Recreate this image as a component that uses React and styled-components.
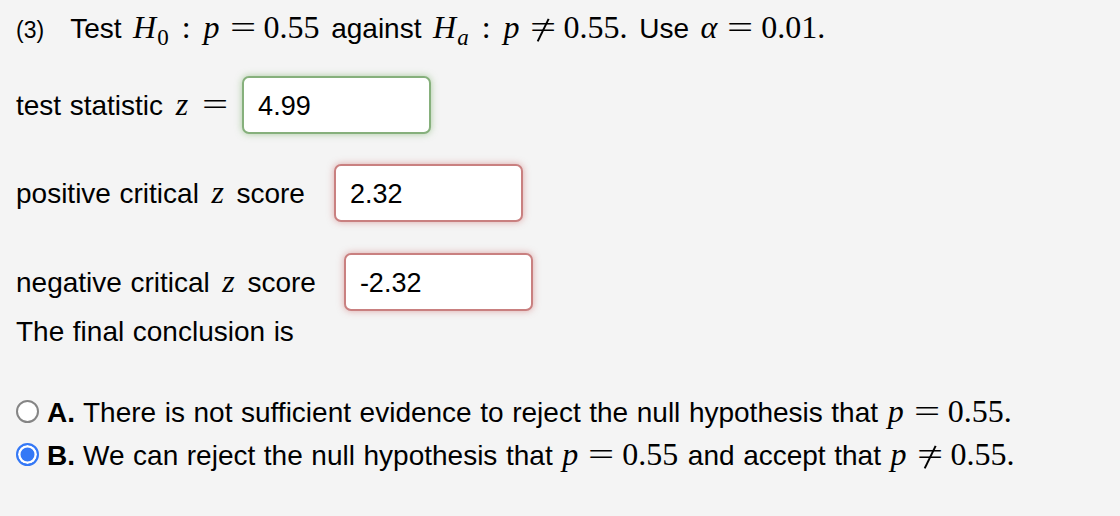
import React from "react";
import styled, { createGlobalStyle } from "styled-components";

const Global = createGlobalStyle`
  html, body { margin: 0; padding: 0; background: #f4f4f4; }
  body { font-family: "Liberation Sans", Arial, sans-serif; color: #000; }
`;

const Page = styled.div`
  width: 1120px;
  height: 516px;
  box-sizing: border-box;
  padding: 9px 0 0 16px;
  background: #f4f4f4;
  font-size: 28px;
  word-spacing: 0.8px;
`;

const Line = styled.div`
  height: ${(p) => p.$h || 36}px;
  line-height: ${(p) => p.$h || 36}px;
  margin-top: ${(p) => p.$mt || 0}px;
  white-space: nowrap;
`;

const Num = styled.span`
  font-size: 23px;
  margin-right: 26px;
`;

const Math = styled.span`
  margin: 0 ${(p) => p.$mx ?? 3}px;
  white-space: nowrap;
  word-spacing: 0;
`;

const M = styled.span`
  font-family: "Liberation Serif", "Times New Roman", serif;
  font-size: ${(p) => p.$size || 32}px;
  font-style: ${(p) => (p.$i ? "italic" : "normal")};
`;

const Sub = styled.span`
  font-family: "Liberation Serif", "Times New Roman", serif;
  font-size: 23px;
  font-style: ${(p) => (p.$i ? "italic" : "normal")};
  position: relative;
  top: 7px;
  margin-left: 1px;
`;

const Colon = styled.span`
  font-family: "Liberation Serif", "Times New Roman", serif;
  font-size: 32px;
  margin: 0 13px;
`;

const Rel = styled.span`
  position: relative;
  display: inline-block;
  width: 26px;
  line-height: 36px;
  text-align: center;
  font-family: "Liberation Serif", "Times New Roman", serif;
  font-size: 32px;
  margin: 0 8px 0 10px;
  ${(p) =>
    p.$ne &&
    `
    &::after {
      content: "";
      position: absolute;
      left: 50%;
      top: 21px;
      width: 1.6px;
      height: 25px;
      background: #000;
      transform: translate(-50%, -50%) rotate(26deg);
    }
  `}
`;

const Glyph = styled.span`
  display: inline-block;
  transform: scaleX(1.45);
`;

const Row = styled.div`
  display: flex;
  align-items: center;
  height: 58px;
  margin-top: ${(p) => p.$mt}px;
  white-space: nowrap;
`;

const Label = styled.span`
  line-height: 36px;
`;

const Z = styled.span`
  font-family: "Liberation Serif", "Times New Roman", serif;
  font-style: italic;
  font-size: 32px;
  margin: 0 4px;
`;

const Box = styled.div`
  box-sizing: border-box;
  width: 189px;
  height: 58px;
  margin-left: ${(p) => p.$ml}px;
  background: #fff;
  border: 2px solid ${(p) => (p.$ok ? "#86b07c" : "#c98080")};
  border-radius: 7px;
  box-shadow: 0 0 7px ${(p) => (p.$ok ? "rgba(110,170,90,0.55)" : "rgba(200,90,90,0.5)")};
  padding: 2px 0 0 14px;
  display: flex;
  align-items: center;
  font-size: 27px;
`;

const Option = styled.div`
  display: flex;
  align-items: center;
  height: 43px;
  margin-top: ${(p) => p.$mt || 0}px;
  white-space: nowrap;
`;

const Radio = styled.span`
  box-sizing: border-box;
  width: 23px;
  height: 23px;
  border-radius: 50%;
  margin-right: 8px;
  flex: none;
  background: ${(p) => (p.$on ? "#3478f6" : "#fff")};
  border: ${(p) => (p.$on ? "2.5px solid #3478f6" : "2px solid #858585")};
  box-shadow: ${(p) => (p.$on ? "inset 0 0 0 2.5px #fff" : "none")};
`;

const Letter = styled.b`
  margin-right: 8px;
`;

const Eq = () => (
  <Rel>
    <Glyph>=</Glyph>
  </Rel>
);

const Ne = () => (
  <Rel $ne>
    <Glyph>=</Glyph>
  </Rel>
);

const App = () => (
  <Page>
    <Global />
    <Line>
      <Num>(3)</Num>
      Test{" "}
      <Math>
        <M $i>H</M>
        <Sub>0</Sub>
        <Colon>:</Colon>
        <M $i>p</M>
        <Eq />
        <M>0.55</M>
      </Math>{" "}
      against{" "}
      <Math>
        <M $i>H</M>
        <Sub $i>a</Sub>
        <Colon>:</Colon>
        <M $i>p</M>
        <Ne />
        <M>0.55.</M>
      </Math>{" "}
      Use{" "}
      <Math>
        <M $i>α</M>
        <Eq />
        <M>0.01.</M>
      </Math>
    </Line>

    <Row $mt={31}>
      <Label>
        test statistic <Z>z</Z>
        <Eq />
      </Label>
      <Box $ok $ml={6}>4.99</Box>
    </Row>

    <Row $mt={30}>
      <Label>
        positive critical <Z>z</Z> score
      </Label>
      <Box $ml={29}>2.32</Box>
    </Row>

    <Row $mt={31}>
      <Label>
        negative critical <Z>z</Z> score
      </Label>
      <Box $ml={28}>-2.32</Box>
    </Row>

    <Line $mt={3}>The final conclusion is</Line>

    <Option $mt={40}>
      <Radio />
      <Label>
        <Letter>A.</Letter>
        There is not sufficient evidence to reject the null hypothesis that{" "}
        <Math $mx={1}>
          <M $i>p</M>
          <Eq />
          <M>0.55.</M>
        </Math>
      </Label>
    </Option>
    <Option>
      <Radio $on />
      <Label>
        <Letter>B.</Letter>
        We can reject the null hypothesis that{" "}
        <Math $mx={1}>
          <M $i>p</M>
          <Eq />
          <M>0.55</M>
        </Math>{" "}
        and accept that{" "}
        <Math $mx={1}>
          <M $i>p</M>
          <Ne />
          <M>0.55.</M>
        </Math>
      </Label>
    </Option>
  </Page>
);

export default App;
